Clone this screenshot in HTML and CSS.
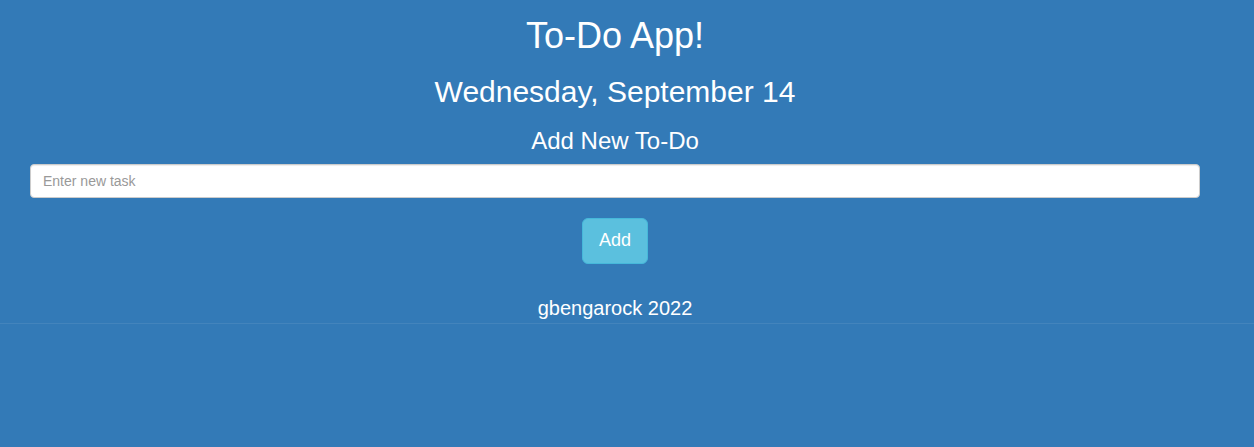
FILE: index.html
```html
<!DOCTYPE html>
<html lang="en">
<head>
<meta charset="utf-8">
<title>To-Do App</title>
<link rel="stylesheet" href="styles.css">
</head>
<body>
<main class="page">
  <h1 class="title">To-Do App!</h1>
  <h2 class="date">Wednesday, September 14</h2>
  <h3 class="subtitle">Add New To-Do</h3>
  <form class="todo-form">
    <input class="task-input" type="text" placeholder="Enter new task">
    <button class="add-btn" type="button">Add</button>
  </form>
  <footer class="footer">gbengarock 2022</footer>
</main>
<div class="rule"></div>
</body>
</html>
```

FILE: styles.css
```css
html, body {
  margin: 0;
  padding: 0;
}
body {
  background: #337ab7;
  color: #fff;
  font-family: "Liberation Sans", Arial, Helvetica, sans-serif;
  font-size: 14px;
  line-height: 1.42857;
  min-height: 447px;
}
.page {
  width: 1170px;
  margin-left: 30px;
  text-align: center;
  display: flow-root;
}
.title, .date, .subtitle {
  font-weight: 400;
  line-height: 1.1;
  margin: 20px 0 10px;
}
.title {
  font-size: 36px;
  margin-top: 16px;
}
.date {
  font-size: 30px;
  margin-top: 19px;
}
.subtitle {
  font-size: 24px;
  margin-bottom: 10px;
}
.todo-form {
  display: flex;
  flex-direction: column;
  align-items: center;
  gap: 20px;
}
.task-input {
  box-sizing: border-box;
  width: 100%;
  height: 34px;
  padding: 6px 12px;
  font-family: inherit;
  font-size: 14px;
  color: #555;
  background: #fff;
  border: 1px solid #ccc;
  border-radius: 4px;
  box-shadow: inset 0 1px 1px rgba(0,0,0,.075);
  outline: none;
}
.task-input::placeholder {
  color: #999;
}
.add-btn {
  box-sizing: border-box;
  height: 46px;
  padding: 10px 16px;
  font-family: inherit;
  font-size: 18px;
  line-height: 1.3333;
  color: #fff;
  background: #5bc0de;
  border: 1px solid #46b8da;
  border-radius: 6px;
}
.footer {
  font-size: 20px;
  line-height: 1.2;
  margin-top: 32px;
  padding-bottom: 3px;
}
.rule {
  height: 1px;
  background: rgba(255,255,255,.08);
}
```
